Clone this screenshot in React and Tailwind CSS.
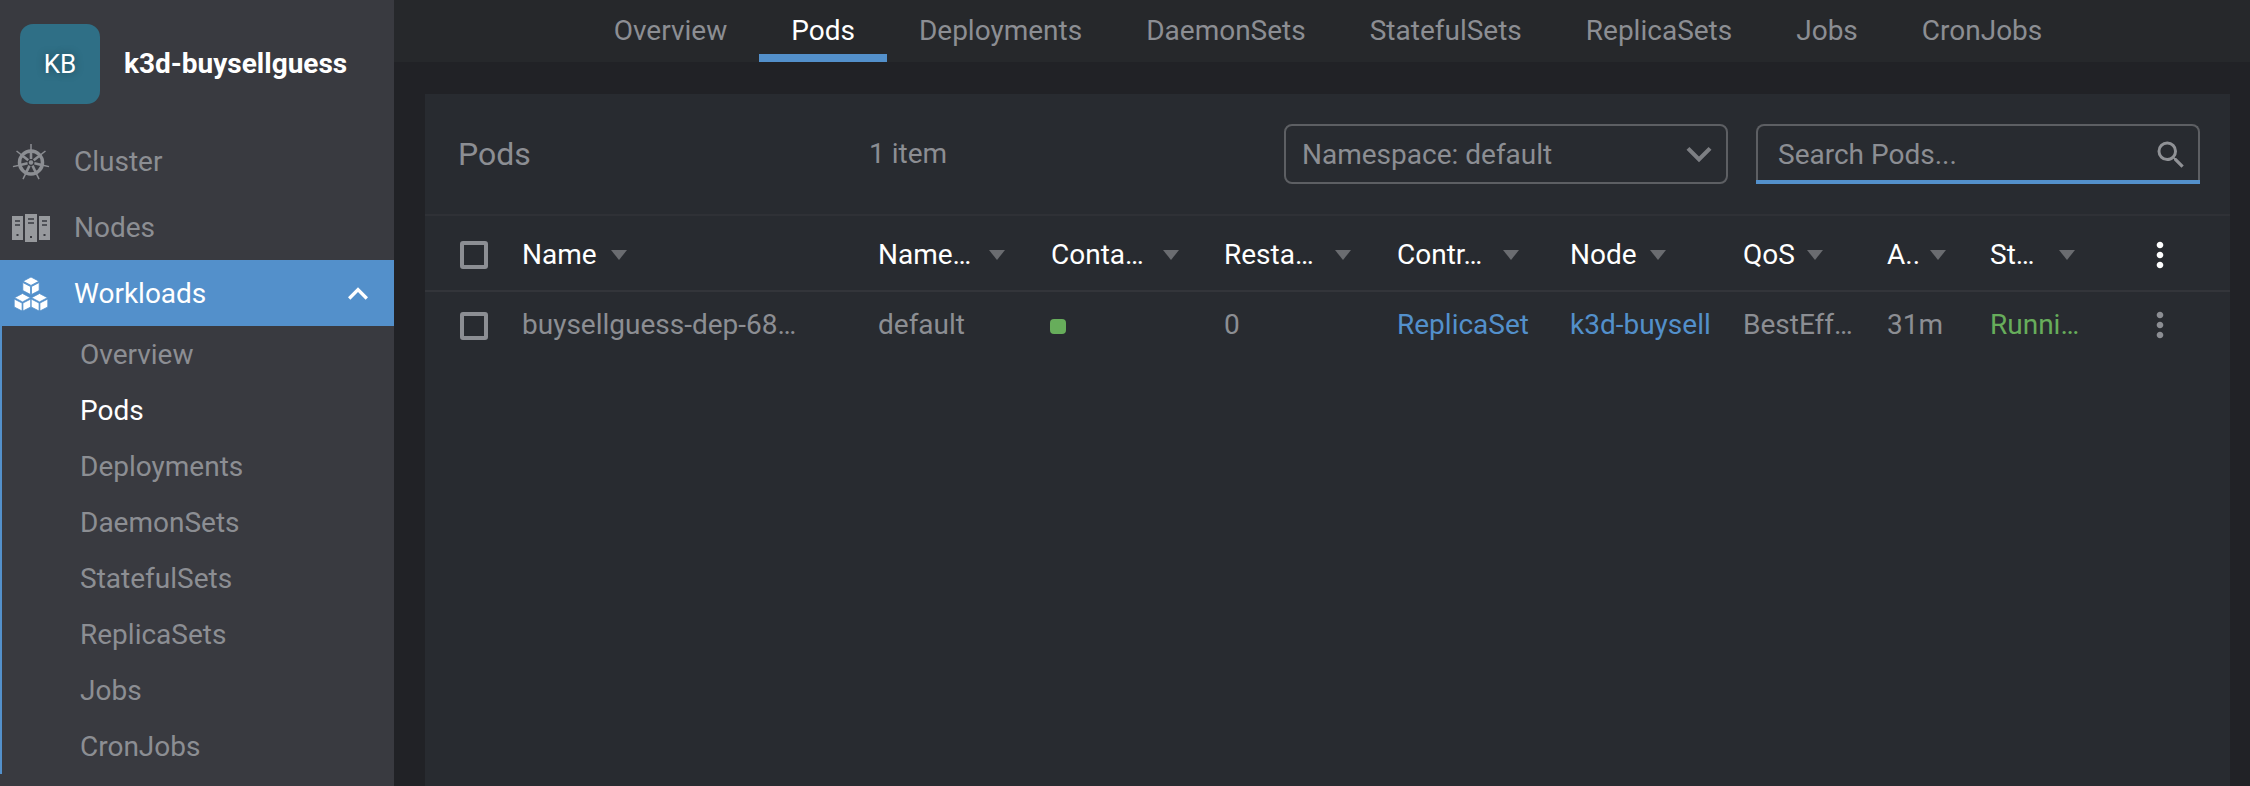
import React from "react";
import { MdKeyboardArrowDown, MdKeyboardArrowUp, MdMoreVert, MdSearch } from "react-icons/md";

const subItems = ["Overview", "Pods", "Deployments", "DaemonSets", "StatefulSets", "ReplicaSets", "Jobs", "CronJobs"];
const tabs = ["Overview", "Pods", "Deployments", "DaemonSets", "StatefulSets", "ReplicaSets", "Jobs", "CronJobs"];
const gridCols = "grid grid-cols-[97px_356px_173px_173px_173px_173px_173px_144px_103px_150px_1fr]";
const spokes = [0, 1, 2, 3, 4, 5, 6].map((i) => (i * 2 * Math.PI) / 7 - Math.PI / 2);

const HelmIcon = () => (
  <svg viewBox="0 0 38 38" className="w-[38px] h-[38px] text-[#8c8e93]" fill="none" stroke="currentColor">
    <circle cx="19" cy="19.5" r="11.5" strokeWidth="3.5" />
    {spokes.map((a) => (
      <g key={a}>
        <line
          x1={19 + 3.5 * Math.cos(a)}
          y1={19.5 + 3.5 * Math.sin(a)}
          x2={19 + 12 * Math.cos(a)}
          y2={19.5 + 12 * Math.sin(a)}
          strokeWidth="2.6"
        />
        <line
          x1={19 + 12 * Math.cos(a)}
          y1={19.5 + 12 * Math.sin(a)}
          x2={19 + 18.5 * Math.cos(a)}
          y2={19.5 + 18.5 * Math.sin(a)}
          strokeWidth="1.5"
        />
      </g>
    ))}
    <circle cx="19" cy="19.5" r="2.2" fill="currentColor" stroke="none" />
  </svg>
);

const NodesIcon = () => (
  <svg viewBox="0 0 38 28" className="w-[38px] h-[28px] text-[#97999d]">
    <path fill="currentColor" d="M0 2h11v24H0zM13 0h12v28H13zM27 2h11v24H27z" />
    <path stroke="#393a40" strokeWidth="1.5" d="M3 7h5M3 11h5M16 5h6M16 9h6M30 7h5M30 11h5" />
    <path stroke="#393a40" strokeWidth="2" d="M5.5 20v2M19 22v2M32.5 20v2" />
  </svg>
);

const CubesIcon = () => (
  <svg viewBox="0 0 34 34" className="w-[34px] h-[34px] text-white">
    <g stroke="#5390cb" strokeWidth="0.8" fill="currentColor">
      <path d="M17 0l8 4.2-8 4.2-8-4.2z" />
      <path d="M8.8 5.5l7.7 4v8l-7.7-4zM25.2 5.5l-7.7 4v8l7.7-4z" />
      <path d="M8.5 16.5l8 4.2-8 4.2-8-4.2z" />
      <path d="M.2 22l7.9 4v8l-7.9-4zM16.8 22l-7.9 4v8l7.9-4z" />
      <path d="M25.5 16.5l8 4.2-8 4.2-8-4.2z" />
      <path d="M17.2 22l7.9 4v8l-7.9-4zM33.8 22l-7.9 4v8l7.9-4z" />
    </g>
  </svg>
);

const SortArrow = () => (
  <span className="w-0 h-0 border-x-[8px] border-x-transparent border-t-[10px] border-t-[#6a6c70] shrink-0"></span>
);

const CheckBox = () => (
  <span className="block w-[28px] h-[28px] border-[4px] border-[#8c8e93] rounded-[3px]"></span>
);

const HeadCell = ({ label, gap }) => (
  <div className={`flex items-center ${gap}`}>
    <span>{label}</span>
    <SortArrow />
  </div>
);

const App = () => {
  return (
    <div className="flex h-[786px] w-[2250px] overflow-hidden bg-[#212226] font-['Roboto',sans-serif] text-[28px] text-[#8c8e93]">
      {/* SIDEBAR */}
      <aside className="w-[394px] shrink-0 bg-[#393a40] flex flex-col">
        <div className="flex items-center gap-6 px-5 pt-6 h-[128px] pb-[24px]">
          <div className="w-[80px] h-[80px] rounded-[13px] bg-[#2f6f86] flex items-center justify-center text-white text-[26px] [text-shadow:0_0_8px_rgba(0,0,0,0.35)]">
            KB
          </div>
          <span className="text-white font-bold text-[28px]">k3d-buysellguess</span>
        </div>

        <div className="h-[66px] pt-[2px] flex items-center">
          <div className="w-[74px] pl-[12px]"><HelmIcon /></div>
          <span>Cluster</span>
        </div>
        <div className="h-[66px] pt-[2px] flex items-center">
          <div className="w-[74px] pl-[12px]"><NodesIcon /></div>
          <span>Nodes</span>
        </div>
        <div className="h-[66px] pt-[2px] flex items-center bg-[#5390cb] text-white">
          <div className="w-[74px] pl-[14px]"><CubesIcon /></div>
          <span className="flex-1">Workloads</span>
          <MdKeyboardArrowUp size={40} className="mr-[16px]" />
        </div>
        <div className="border-l-2 border-[#5390cb] pl-[78px] flex flex-col">
          {subItems.map((item) => (
            <div key={item} className={`h-[56px] pt-[2px] flex items-center ${item === "Pods" ? "text-white" : ""}`}>
              {item}
            </div>
          ))}
        </div>
      </aside>

      {/* MAIN */}
      <main className="flex-1 flex flex-col min-w-0">
        <nav className="h-[62px] bg-[#26282b] flex justify-center pl-[12px]">
          {tabs.map((tab) => (
            <div
              key={tab}
              className={`px-8 flex items-center border-b-[8px] pt-2 ${
                tab === "Pods" ? "text-white border-[#5390cb]" : "border-transparent"
              }`}
            >
              {tab}
            </div>
          ))}
        </nav>

        <div className="flex-1 pt-8 pl-[31px] pr-[20px]">
          <section className="h-full bg-[#282b30]">
            <div className="h-[122px] flex items-center pl-[33px] pr-[30px] border-b-2 border-[#2f3136]">
              <span className="w-[411px] text-[32px]">Pods</span>
              <span>1 item</span>
              <div className="ml-auto flex gap-[28px]">
                <div className="w-[444px] h-[60px] border-2 border-[#5d5f63] rounded-lg flex items-center justify-between pl-4 pr-[2px]">
                  <span className="pt-[2px]">Namespace: default</span>
                  <MdKeyboardArrowDown size={50} className="text-[#7d7f83]" />
                </div>
                <div className="w-[444px] h-[60px] border-2 border-b-0 border-[#5d5f63] rounded-t-lg flex items-center justify-between pl-5 pr-[9px] relative">
                  <span>Search Pods...</span>
                  <MdSearch size={36} className="text-[#909296]" />
                  <span className="absolute -left-[2px] -right-[2px] bottom-0 h-[4px] bg-[#5390cb]"></span>
                </div>
              </div>
            </div>

            <div className={`${gridCols} h-[76px] pt-[3px] items-center border-b-2 border-[#33353a] text-white`}>
              <div className="pl-[35px]"><CheckBox /></div>
              <HeadCell label="Name" gap="gap-[14px]" />
              <HeadCell label="Name…" gap="gap-[18px]" />
              <HeadCell label="Conta…" gap="gap-[19px]" />
              <HeadCell label="Resta…" gap="gap-[21px]" />
              <HeadCell label="Contr…" gap="gap-[21px]" />
              <HeadCell label="Node" gap="gap-[13px]" />
              <HeadCell label="QoS" gap="gap-[12px]" />
              <HeadCell label="A.." gap="gap-[10px]" />
              <HeadCell label="St…" gap="gap-[24px]" />
              <div className="flex"><MdMoreVert size={40} className="text-white" /></div>
            </div>

            <div className={`${gridCols} h-[66px] items-center`}>
              <div className="pl-[35px] mt-[2px]"><CheckBox /></div>
              <div>buysellguess-dep-68…</div>
              <div>default</div>
              <div><span className="block w-4 h-[15px] mt-[2px] -ml-[1px] rounded-[4px] bg-[#67ad5b]"></span></div>
              <div>0</div>
              <div className="text-[#5390cb]">ReplicaSet</div>
              <div className="text-[#5390cb]">k3d-buysell</div>
              <div>BestEff…</div>
              <div>31m</div>
              <div className="text-[#67ad5b]">Runni…</div>
              <div className="flex"><MdMoreVert size={40} className="text-[#8c8e93]" /></div>
            </div>
          </section>
        </div>
      </main>
    </div>
  );
};

export default App;
